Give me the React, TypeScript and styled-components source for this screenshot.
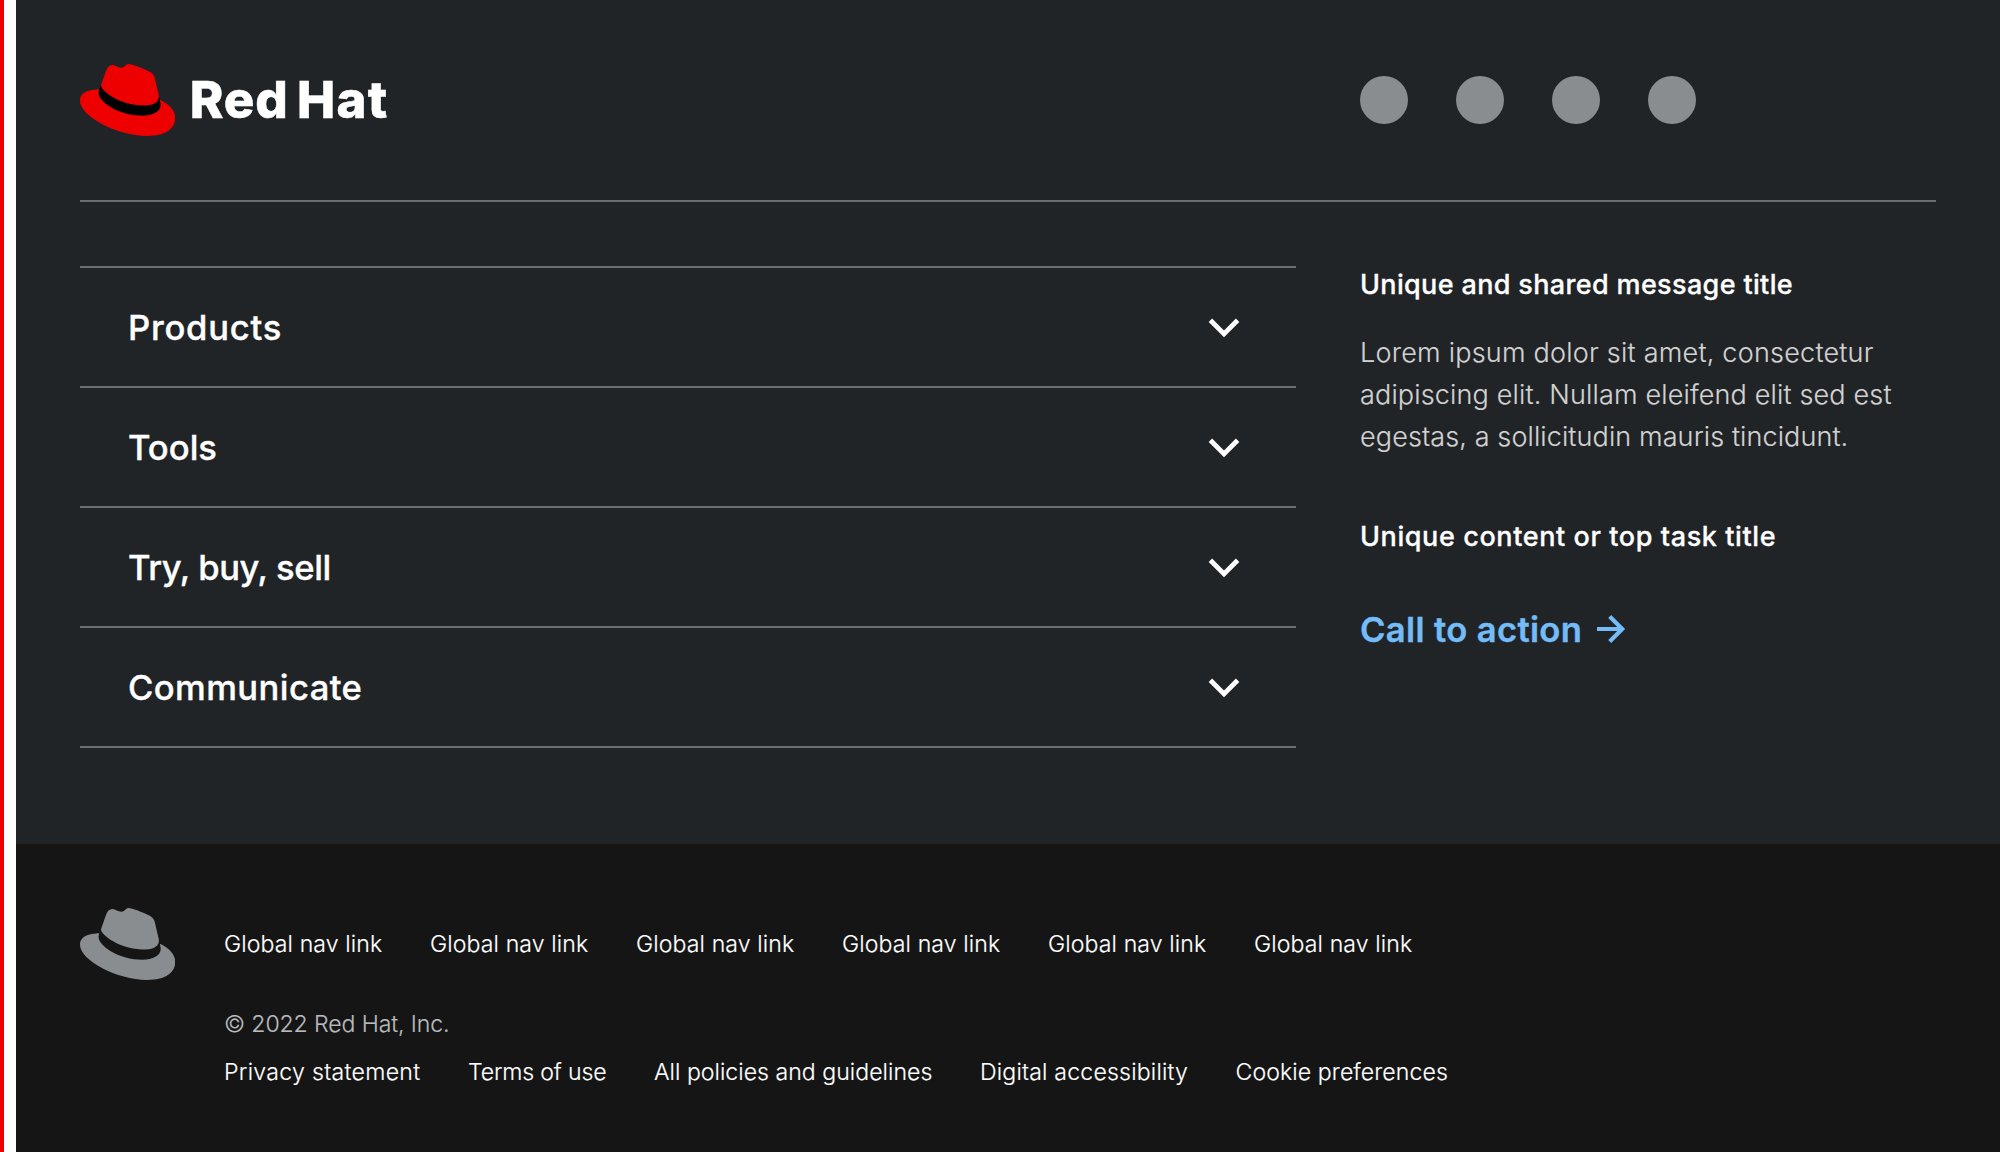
import React from "react";
import styled, { createGlobalStyle } from "styled-components";

const GlobalStyle = createGlobalStyle`
  * { box-sizing: border-box; }
  body { margin: 0; background: #ffffff; }
  a { color: inherit; text-decoration: none; }
  h3, p { margin: 0; font-weight: inherit; }
`;

const Page = styled.div`
  height: 1152px;
  display: flex;
  overflow: hidden;
  background: #ffffff;
  border-left: 4px solid #ee0000;
  padding-left: 12px;
  font-family: Inter, "Liberation Sans", sans-serif;
  color: #ffffff;
`;

const Footer = styled.footer`
  flex: 1;
  display: flex;
  flex-direction: column;
`;

const Main = styled.section`
  flex: none;
  height: 844px;
  padding: 0 64px;
  background: #212427;
`;

const columns = `
  display: grid;
  grid-template-columns: 1216px 1fr;
  column-gap: 64px;
`;

const Header = styled.div`
  ${columns}
  height: 202px;
  align-items: center;
  border-bottom: 2px solid #6a6e73;
`;

const Brand = styled.a`
  display: flex;
  align-items: center;
  height: 72px;
`;

const HatSvg = styled.svg`
  display: block;
  flex: none;
  width: 95.3px;
  height: 72px;
`;

const Wordmark = styled.span`
  display: flex;
  margin-left: 14.5px;
  font-size: 51px;
  font-weight: 800;
  line-height: 72px;
  -webkit-text-stroke: 0.5px currentColor;
`;

const Word = styled.span<{ $track: number; $gap?: number }>`
  letter-spacing: ${(p) => p.$track}px;
  margin-left: ${(p) => p.$gap ?? 0}px;
`;

const SocialLinks = styled.div`
  display: flex;
  gap: 48px;
`;

const SocialDot = styled.a`
  width: 48px;
  height: 48px;
  border-radius: 50%;
  background: #8a8d90;
`;

const Body = styled.div`
  ${columns}
  padding-top: 64px;
  align-items: start;
`;

const Accordion = styled.div`
  border-top: 2px solid #6a6e73;
`;

const AccordionRow = styled.div`
  height: 120px;
  padding: 0 56px 0 48px;
  display: flex;
  align-items: center;
  justify-content: space-between;
  border-bottom: 2px solid #6a6e73;
`;

const AccordionTitle = styled.h3<{ $track: number }>`
  font-size: 34.6px;
  font-weight: 500;
  line-height: 52px;
  letter-spacing: ${(p) => p.$track}px;
  -webkit-text-stroke: 0.35px currentColor;
`;

const ChevronSvg = styled.svg`
  width: 32px;
  height: 20px;
  margin-top: 2px;
`;

const Aside = styled.aside`
  display: flex;
  flex-direction: column;
  align-items: flex-start;
`;

const AsideTitle = styled.h3<{ $track: number }>`
  padding-top: 1px;
  font-size: 27px;
  font-weight: 500;
  line-height: 36px;
  letter-spacing: ${(p) => p.$track}px;
  -webkit-text-stroke: 0.3px currentColor;
`;

const Message = styled.p`
  margin: 29px 0 60px;
  font-size: 27px;
  font-weight: 300;
  line-height: 42px;
  color: #d2d2d2;
  -webkit-text-stroke: 0.15px currentColor;
`;

const MessageLine = styled.span<{ $track: number }>`
  display: block;
  white-space: nowrap;
  letter-spacing: ${(p) => p.$track}px;
`;

const CallToAction = styled.a`
  display: flex;
  align-items: center;
  gap: 15px;
  margin-top: 47px;
  font-size: 34.6px;
  font-weight: 600;
  line-height: 54px;
  letter-spacing: 0.36px;
  -webkit-text-stroke: 0.4px currentColor;
  && { color: #73bcf7; }
`;

const ArrowSvg = styled.svg`
  width: 30px;
  height: 30px;
`;

const Global = styled.section`
  flex: 1;
  display: flex;
  gap: 48px;
  padding: 64px 64px 56px;
  background: #151515;
  font-size: 23.1px;
  font-weight: 300;
  -webkit-text-stroke: 0.15px currentColor;
`;

const HatSlot = styled.div`
  width: 96px;
`;

const GlobalNav = styled.nav`
  height: 72px;
  display: flex;
  align-items: center;
  gap: 48px;
`;

const Copyright = styled.div`
  margin-top: 20px;
  line-height: 48px;
  letter-spacing: -0.12px;
  color: #b8bbbe;
`;

const LegalNav = styled.nav`
  display: flex;
  gap: 48px;
  line-height: 48px;
`;

const FooterLink = styled.a<{ $width: number; $track: number }>`
  width: ${(p) => p.$width}px;
  white-space: nowrap;
  letter-spacing: ${(p) => p.$track}px;
`;

const CROWN =
  "M16.009 13.386c1.577 0 3.86-.326 3.86-2.202a1.765 1.765 0 0 0-.04-.431l-.94-4.08c-.216-.898-.406-1.305-1.982-2.093-1.223-.625-3.888-1.658-4.676-1.658-.733 0-.947.946-1.822.946-.842 0-1.467-.706-2.255-.706-.757 0-1.25.515-1.63 1.576 0 0-1.06 2.99-1.197 3.424a.81.81 0 0 0-.028.245c0 1.162 4.577 4.974 10.71 4.974z";
const BRIM =
  "M20.11 11.951c.218 1.032.218 1.14.218 1.277 0 1.765-1.984 2.745-4.593 2.745-5.895.004-11.06-3.451-11.06-5.734a2.326 2.326 0 0 1 .19-.925C2.746 9.415 0 9.794 0 12.217c0 3.969 9.405 8.861 16.851 8.861 5.71 0 7.149-2.582 7.149-4.62 0-1.605-1.387-3.425-3.887-4.512z";
const BAND =
  "M20.11 11.951c.218 1.032.218 1.14.218 1.277 0 1.765-1.984 2.745-4.593 2.745-5.895.004-11.06-3.451-11.06-5.734a2.326 2.326 0 0 1 .19-.925L5.33 8.17 16 12 19.83 10.75z";

function Hat({ color, band }: { color: string; band?: string }) {
  return (
    <HatSvg viewBox="0 2.92 24 18.16" preserveAspectRatio="none" aria-hidden>
      {band && <path d={BAND} fill={band} />}
      <path d={BRIM} fill={color} />
      <path d={CROWN} fill={color} />
    </HatSvg>
  );
}

function Chevron() {
  return (
    <ChevronSvg viewBox="0 0 32 20" fill="none">
      <path d="M2.4 2.3 16 15.9 29.6 2.3" stroke="#fff" strokeWidth="4.8" />
    </ChevronSvg>
  );
}

function Arrow() {
  return (
    <ArrowSvg viewBox="0 0 30 30" fill="none" stroke="currentColor" strokeWidth="4.2">
      <path d="M0 15H25M12.7 2.4 25.2 15 12.7 27.6" />
    </ArrowSvg>
  );
}

const sections = [
  { label: "Products", track: 0.75 },
  { label: "Tools", track: 0 },
  { label: "Try, buy, sell", track: -0.42 },
  { label: "Communicate", track: 0.42 },
];

const message = [
  { text: "Lorem ipsum dolor sit amet, consectetur", track: 0.23 },
  { text: "adipiscing elit. Nullam eleifend elit sed est", track: 0.16 },
  { text: "egestas, a sollicitudin mauris tincidunt.", track: 0.11 },
];

const legal = [
  { label: "Privacy statement", width: 196, track: 0.3 },
  { label: "Terms of use", width: 138, track: -0.17 },
  { label: "All policies and guidelines", width: 278, track: 0.02 },
  { label: "Digital accessibility", width: 207.5, track: 0.18 },
  { label: "Cookie preferences", width: 214, track: 0.1 },
];

export default function App() {
  return (
    <>
      <GlobalStyle />
      <Page>
        <Footer>
          <Main>
            <Header>
              <Brand>
                <Hat color="#ee0000" band="#000000" />
                <Wordmark>
                  <Word $track={0.8}>Red</Word>
                  <Word $track={1.2} $gap={8.5}>Hat</Word>
                </Wordmark>
              </Brand>
              <SocialLinks>
                {[0, 1, 2, 3].map((i) => (
                  <SocialDot key={i} />
                ))}
              </SocialLinks>
            </Header>
            <Body>
              <Accordion>
                {sections.map((s) => (
                  <AccordionRow key={s.label}>
                    <AccordionTitle $track={s.track}>{s.label}</AccordionTitle>
                    <Chevron />
                  </AccordionRow>
                ))}
              </Accordion>
              <Aside>
                <AsideTitle $track={0.35}>Unique and shared message title</AsideTitle>
                <Message>
                  {message.map((m) => (
                    <MessageLine key={m.text} $track={m.track}>
                      {m.text}
                    </MessageLine>
                  ))}
                </Message>
                <AsideTitle $track={0.6}>Unique content or top task title</AsideTitle>
                <CallToAction>
                  Call to action
                  <Arrow />
                </CallToAction>
              </Aside>
            </Body>
          </Main>
          <Global>
            <HatSlot>
              <Hat color="#8a8d90" />
            </HatSlot>
            <div>
              <GlobalNav>
                {[0, 1, 2, 3, 4, 5].map((i) => (
                  <FooterLink key={i} $width={158} $track={0.1}>
                    Global nav link
                  </FooterLink>
                ))}
              </GlobalNav>
              <Copyright>© 2022 Red Hat, Inc.</Copyright>
              <LegalNav>
                {legal.map((l) => (
                  <FooterLink key={l.label} $width={l.width} $track={l.track}>
                    {l.label}
                  </FooterLink>
                ))}
              </LegalNav>
            </div>
          </Global>
        </Footer>
      </Page>
    </>
  );
}
